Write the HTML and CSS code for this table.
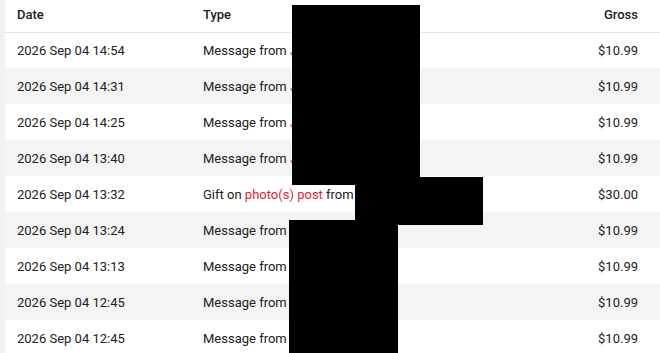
FILE: index.html
```html
<!DOCTYPE html>
<html lang="en">
<head>
    <meta charset="UTF-8">
    <title>Earnings</title>
    <link rel="stylesheet" href="styles.css">
</head>
<body>
<div class="earnings">
    <table class="earnings-table">
        <colgroup>
            <col class="col-date">
            <col class="col-type">
            <col class="col-gross">
        </colgroup>
        <thead>
            <tr>
                <th>Date</th>
                <th>Type</th>
                <th class="amount">Gross</th>
            </tr>
        </thead>
        <tbody>
            <tr><td>2026 Sep 04 14:54</td><td>Message from <span class="link">J</span></td><td class="amount">$10.99</td></tr>
            <tr><td>2026 Sep 04 14:31</td><td>Message from <span class="link">J</span></td><td class="amount">$10.99</td></tr>
            <tr><td>2026 Sep 04 14:25</td><td>Message from <span class="link">J</span></td><td class="amount">$10.99</td></tr>
            <tr><td>2026 Sep 04 13:40</td><td>Message from <span class="link">J</span></td><td class="amount">$10.99</td></tr>
            <tr><td>2026 Sep 04 13:32</td><td>Gift on <span class="link">photo(s) post</span> from</td><td class="amount">$30.00</td></tr>
            <tr><td>2026 Sep 04 13:24</td><td>Message from</td><td class="amount">$10.99</td></tr>
            <tr><td>2026 Sep 04 13:13</td><td>Message from</td><td class="amount">$10.99</td></tr>
            <tr><td>2026 Sep 04 12:45</td><td>Message from</td><td class="amount">$10.99</td></tr>
            <tr><td>2026 Sep 04 12:45</td><td>Message from</td><td class="amount">$10.99</td></tr>
        </tbody>
    </table>

    <!-- redacted names -->
    <div class="redact redact-a"></div>
    <div class="redact redact-b"></div>
    <div class="redact redact-c"></div>
</div>
</body>
</html>
```

FILE: styles.css
```css
* {
    box-sizing: border-box;
    margin: 0;
    padding: 0;
}

body {
    font-family: Roboto, 'Liberation Sans', sans-serif;
    font-size: 13px;
    color: #212121;
    background-color: #f2f2f2;
    overflow: hidden;
}

.earnings {
    position: relative;
    margin-left: 5px;
    background-color: #fff;
    height: 353px;
}

.earnings-table {
    width: 100%;
    border-collapse: collapse;
    table-layout: fixed;
}

.col-date {
    width: 186px;
}

.col-gross {
    width: 160px;
}

.earnings-table th {
    font-weight: 500;
    text-align: left;
    height: 32px;
    padding: 0 12px 2px;
    border-bottom: 1px solid #e3e3e3;
}

.earnings-table td {
    height: 36px;
    padding: 0 12px;
    white-space: nowrap;
}

.earnings-table tbody tr:nth-child(even) {
    background-color: #f4f4f4;
}

.earnings-table .amount {
    text-align: right;
    padding-right: 22px;
}

.link {
    color: #e8193c;
}

.redact {
    position: absolute;
    background-color: #000;
}

.redact-a {
    left: 287px;
    top: 5px;
    width: 128px;
    height: 180px;
}

.redact-b {
    left: 350px;
    top: 177px;
    width: 128px;
    height: 48px;
}

.redact-c {
    left: 284px;
    top: 220px;
    width: 109px;
    height: 133px;
}
```
